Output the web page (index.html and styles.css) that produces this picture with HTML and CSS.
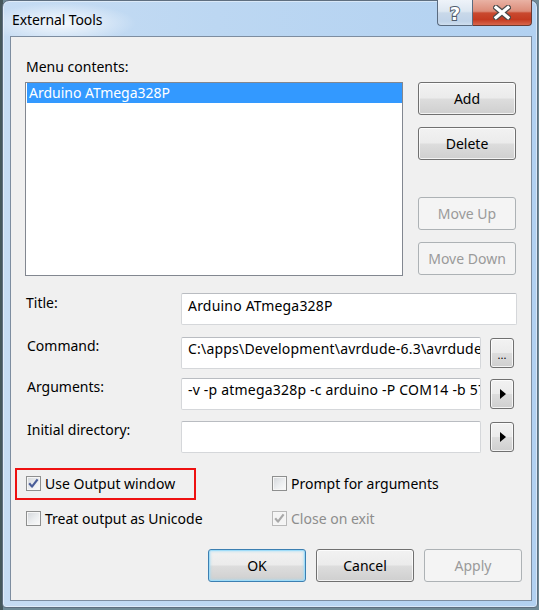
FILE: index.html
```html
<!DOCTYPE html>
<html>
<head>
<meta charset="utf-8">
<title>External Tools</title>
<link rel="stylesheet" href="styles.css">
</head>
<body>
<div class="window">
  <div class="titlebar">
    <div class="title">External Tools</div>
    <div class="caption-btns">
      <div class="cap help">
        <svg width="20" height="22" viewBox="0 0 20 22"><text x="10" y="18" text-anchor="middle" class="qmark">?</text></svg>
      </div>
      <div class="cap close">
        <svg width="18" height="15" viewBox="0 0 18 15">
          <path d="M3 2.5 L15 12.5 M15 2.5 L3 12.5" stroke="#4a4a4a" stroke-width="5.6" stroke-linecap="square" fill="none"/>
          <path d="M3 2.5 L15 12.5 M15 2.5 L3 12.5" stroke="#ffffff" stroke-width="3.2" stroke-linecap="square" fill="none"/>
        </svg>
      </div>
    </div>
  </div>
  <div class="panel">
    <div class="section-label">Menu contents:</div>
    <div class="top">
      <div class="listbox">
        <div class="item sel">Arduino ATmega328P</div>
      </div>
      <div class="side">
        <div class="btn">Add</div>
        <div class="btn gap-s">Delete</div>
        <div class="btn disabled gap-l">Move Up</div>
        <div class="btn disabled gap-s">Move Down</div>
      </div>
    </div>

    <div class="field f-title">
      <div class="lbl">Title:</div>
      <div class="input wide">Arduino ATmega328P</div>
    </div>
    <div class="field f-cmd">
      <div class="lbl">Command:</div>
      <div class="input mid">C:\apps\Development\avrdude-6.3\avrdude.exe</div>
      <div class="btn sbtn dots">...</div>
    </div>
    <div class="field f-args">
      <div class="lbl">Arguments:</div>
      <div class="input mid">-v -p atmega328p -c arduino -P COM14 -b 57600 -D -U flash:w:"$(ProjectDir)Debug\$(TargetName).hex":i</div>
      <div class="btn sbtn"><span class="tri"></span></div>
    </div>
    <div class="field f-dir">
      <div class="lbl">Initial directory:</div>
      <div class="input mid"></div>
      <div class="btn sbtn"><span class="tri"></span></div>
    </div>

    <div class="checks">
      <div class="chk highlight">
        <span class="box"><svg width="13" height="13" viewBox="0 0 13 13"><path d="M2.2 6.3 L5 9.6 L10.6 2.4" stroke="#4a5d99" stroke-width="2.2" fill="none" stroke-linejoin="round"/></svg></span>
        <span>Use Output window</span>
      </div>
      <div class="chk">
        <span class="box"></span>
        <span>Prompt for arguments</span>
      </div>
      <div class="chk">
        <span class="box"></span>
        <span>Treat output as Unicode</span>
      </div>
      <div class="chk off">
        <span class="box"><svg width="13" height="13" viewBox="0 0 13 13"><path d="M2.2 6.3 L5 9.6 L10.6 2.4" stroke="#a8a8a8" stroke-width="2.2" fill="none" stroke-linejoin="round"/></svg></span>
        <span>Close on exit</span>
      </div>
    </div>

    <div class="actions">
      <div class="btn default">OK</div>
      <div class="btn">Cancel</div>
      <div class="btn disabled">Apply</div>
    </div>
  </div>
</div>
</body>
</html>
```

FILE: styles.css
```css
* { box-sizing: border-box; }
html, body { margin: 0; padding: 0; }
body {
  width: 539px;
  height: 610px;
  overflow: hidden;
  background: linear-gradient(90deg, #46585c 0, #46585c 3px, #6f8a96 3px);
  font-family: "Noto Sans", sans-serif;
  font-size: 14px;
  color: #000;
}
.window {
  margin-left: 2px;
  width: 536px;
  height: 608px;
  border: 1px solid #5f6f80;
  border-radius: 7px 7px 4px 4px;
  padding: 0 5px 6px 7px;
  display: flex;
  flex-direction: column;
  background:
    radial-gradient(ellipse 75px 20px at 58px 22px, rgba(255,255,255,0.85), rgba(255,255,255,0)),
    linear-gradient(90deg, #c6dcf3 0%, #bcd7f2 40%, #b2d1f1 100%);
  box-shadow: inset 0 0 0 1px rgba(255,255,255,0.45);
}
.titlebar {
  height: 35px;
  display: flex;
  justify-content: space-between;
  align-items: flex-start;
}
.title {
  padding: 9px 0 0 2px;
  line-height: 19px;
  color: #000;
  letter-spacing: -0.1px;
}
.caption-btns {
  display: flex;
  margin-top: -1px;
}
.cap {
  height: 26px;
  display: flex;
  align-items: center;
  justify-content: center;
  border: 1px solid #5a6b7f;
  border-top: none;
}
.help {
  width: 35px;
  border-right: none;
  border-radius: 0 0 0 4px;
  background: linear-gradient(#eef3f9 0%, #dde7f1 45%, #c9d8e9 52%, #c0d3e8 85%, #cfdfef 100%);
}
.close {
  width: 60px;
  border-color: #6a3a31 #6a3a31 #6a3a31 #5a6b7f;
  border-radius: 0 0 4px 0;
  background: linear-gradient(#e9b2a4 0%, #dc8c79 45%, #c9492f 52%, #c43a20 78%, #d8664c 100%);
}
.qmark {
  font-family: "DejaVu Sans", sans-serif;
  font-weight: bold;
  font-size: 18px;
  fill: #ffffff;
  stroke: #4f5c6c;
  stroke-width: 2px;
  paint-order: stroke;
}
.panel {
  flex: 1;
  background: #f0f0f0;
  border: 1px solid #7d8da0;
  padding: 20px 0 0 14px;
}
.section-label {
  line-height: 20px;
  padding-left: 1px;
}
.top {
  display: flex;
  gap: 15px;
  margin-top: 5px;
}
.listbox {
  width: 378px;
  height: 194px;
  border: 1px solid #828790;
  background: #fff;
  padding: 0 0 0 1px;
}
.item {
  height: 20px;
  line-height: 20px;
  padding-left: 2px;
  white-space: nowrap;
}
.item.sel {
  background: #3399ff;
  color: #fff;
}
.side {
  width: 98px;
  display: flex;
  flex-direction: column;
}
.btn {
  height: 33px;
  width: 98px;
  border: 1px solid #707070;
  border-radius: 3px;
  background: linear-gradient(#f2f2f2 0%, #ebebeb 49%, #dddddd 51%, #cfcfcf 100%);
  box-shadow: inset 0 0 0 1px rgba(255,255,255,0.75);
  display: flex;
  align-items: center;
  justify-content: center;
  line-height: 20px;
  color: #000;
  white-space: nowrap;
}
.btn.disabled {
  border-color: #adb2b5;
  background: #f4f4f4;
  box-shadow: none;
  color: #9a9a9a;
}
.btn.default {
  border-color: #3c7fb1;
  box-shadow: inset 0 0 0 1px #9fdcf8, inset 0 0 2px 2px rgba(160,220,248,0.5);
}
.gap-s { margin-top: 12px; }
.gap-l { margin-top: 37px; }

.field {
  display: flex;
  align-items: flex-start;
}
.f-title { margin-top: 17px; }
.f-cmd { margin-top: 12px; }
.f-args { margin-top: 9px; }
.f-dir { margin-top: 11px; }
.lbl {
  width: 156px;
  flex: none;
  padding-left: 2px;
  line-height: 20px;
  margin-top: -1px;
}
.f-title .lbl {
  margin-top: 0;
  padding-left: 1px;
}
.input {
  height: 32px;
  flex: none;
  border: 1px solid #d5d7da;
  border-top-color: #b9bcc1;
  border-radius: 2px;
  background: #fff;
  padding: 1px 6px 0 6px;
  line-height: 20px;
  white-space: nowrap;
  overflow: hidden;
  letter-spacing: 0.2px;
}
.input.wide { width: 336px; padding-top: 2px; }
.input.mid { width: 300px; }
.sbtn {
  width: 24px;
  height: 30px;
  margin: 1px 0 0 9px;
  flex: none;
}
.dots {
  font-size: 11px;
  align-items: flex-end;
  padding-bottom: 6px;
  line-height: 12px;
}
.tri {
  width: 0;
  height: 0;
  border-top: 5px solid transparent;
  border-bottom: 5px solid transparent;
  border-left: 6px solid #000;
  margin-left: 2px;
}

.checks {
  display: grid;
  grid-template-columns: 246px 1fr;
  row-gap: 14px;
  margin-top: 20px;
}
.chk {
  height: 21px;
  display: flex;
  align-items: center;
  gap: 4px;
  padding-left: 1px;
  position: relative;
  white-space: nowrap;
}
.box {
  width: 15px;
  height: 15px;
  flex: none;
  border: 1px solid #8e8f8f;
  background: linear-gradient(135deg, #d3d6da 0%, #eceef0 55%, #fbfbfb 100%);
  box-shadow: inset 0 0 0 1px #f6f6f6;
  display: flex;
  align-items: center;
  justify-content: center;
}
.chk.off { color: #8d8d8d; }
.chk.off .box {
  border-color: #b9b9b9;
  background: #f4f4f4;
}
.highlight::after {
  content: "";
  position: absolute;
  left: -10px;
  top: -5px;
  width: 177px;
  height: 28px;
  border: 2px solid #ee1111;
}

.actions {
  display: flex;
  justify-content: flex-end;
  gap: 10px;
  margin-top: 20px;
  padding-right: 9px;
}
```
